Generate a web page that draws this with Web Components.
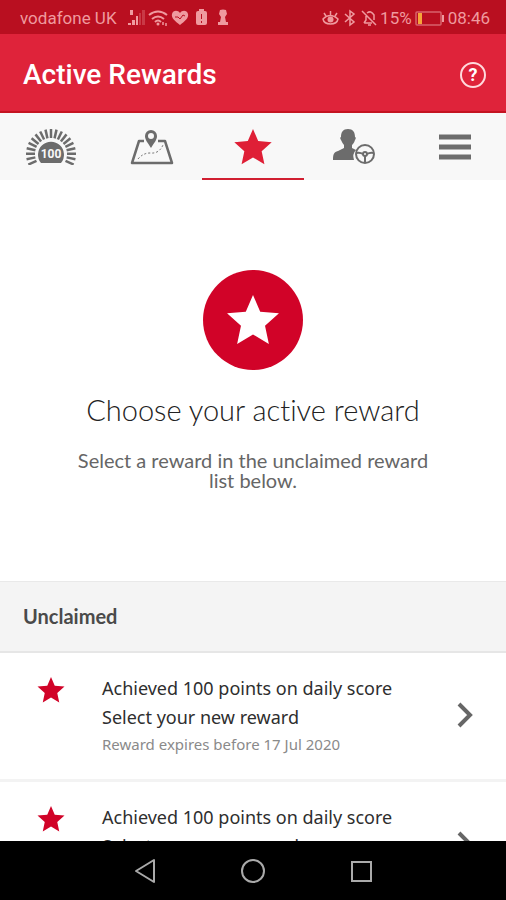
<!DOCTYPE html>
<html lang="en">
<head>
<meta charset="utf-8">
<meta name="viewport" content="width=device-width, initial-scale=1">
<title>Active Rewards</title>
<style>
body { margin: 0; background: #fff; font-family: Roboto, "Liberation Sans", sans-serif; }
</style>
</head>
<body>
<rewards-app></rewards-app>
<script>
const define = (name, html) => customElements.define(name, class extends HTMLElement {
  constructor() {
    super();
    const t = document.createElement('template');
    t.innerHTML = html;
    this.attachShadow({ mode: 'open' }).append(t.content.cloneNode(true));
  }
});

define('star-icon', `
<style>:host{display:block} svg{display:block;width:100%;height:100%}</style>
<svg viewBox="0 0 54 52" aria-hidden="true"><path fill="currentColor" d="M27 0 34.500 17.500 54 19 39.500 32 43.500 51 27 41 10.500 51 14.500 32 0 19 19.500 17.500Z"/></svg>`);

define('status-bar', `
<style>
:host{display:flex;align-items:center;justify-content:space-between;height:34px;padding:2px 16px 0 20px;box-sizing:border-box;background:#b90f20;color:#ef9a9f;font-size:17px;line-height:20px;white-space:nowrap}
div{display:flex;align-items:center}
svg{display:block;fill:none;stroke:currentColor;stroke-width:2}
.f{fill:currentColor;stroke:none}
.left{gap:10px}.right{gap:3px}
</style>
<div class="left"><span>vodafone UK</span>
<svg width="101" height="20" viewBox="0 0 101 20">
 <g class="f"><path d="M1 15h3v2H1zM5 12h3v5H5zM9 8h2v9H9zM3 2h3v5H3z"/><path opacity=".3" d="M12 5h2v12h-2zM15 2h3v15h-3z"/></g>
 <path d="M22 7q9-7 18 0M25 11q6-5 12 0M28 14q3-3 6 0"/><circle class="f" cx="31" cy="16" r="1.500"/><path d="M36 14v3M39 15v3" stroke-width="1.500"/>
 <path class="f" d="M53 17C48 13 44 10 45 6c1-4 6-4 8-1 2-3 7-3 8 1 1 4-3 7-8 11Z"/><path stroke="#b90f20" d="M48 9h3l2 2 3-4 2 1" stroke-width="1"/>
 <path class="f" d="M72 1h5v2h1q2 0 2 2v10q0 2-2 2h-7q-2 0-2-2V5q0-2 2-2h1z"/><path stroke="#b90f20" stroke-width="1" d="M74.500 6v5M74.500 13v2"/>
 <path class="f" d="M93 2q3-1 6 0l1 4-2 3 1 5h2v3H91v-3h2l1-5-2-3z"/>
</svg></div>
<div class="right">
<svg width="56" height="20" viewBox="0 0 56 20">
 <path d="M2 11q7-7 15 0-1 5-7.500 5T2 11ZM9.500 3v4M3 5l2 3M16 5l-2 3" stroke-width="1.500"/><circle class="f" cx="9.500" cy="11.500" r="3"/>
 <path stroke-width="1.500" d="m24 6 9 8-4 3V3l4 3-9 8"/>
 <path stroke-width="1.500" d="m41 3 14 14M43 15h8M43 15l2-3V8M46 5q4-3 7 2v5M47 17h3"/>
</svg><span>15%</span>
<svg width="30" height="16" viewBox="0 0 30 16"><rect x="1" y="2" width="25" height="13" rx="1" stroke-width="1.500" opacity=".6"/><path fill="#f6a43a" stroke="none" d="M3 3h4v11H3z"/><path d="M28 5v7"/></svg>
<span>08:46</span></div>`);

define('app-header', `
<style>
:host{display:flex;align-items:center;justify-content:space-between;height:79px;box-sizing:border-box;padding:4px 20px 0 23px;background:#df233a;border-bottom:2px solid #c41422;color:#fff}
h1{margin:0;font-size:28px;line-height:32px;font-weight:500}
button{display:block;padding:0;border:0;background:none;color:inherit;font:700 18px/22px Roboto,sans-serif;width:26px;height:26px;border:2px solid #ffd9dc;border-radius:50%;box-sizing:border-box}
</style>
<h1><slot></slot></h1><button aria-label="Help">?</button>`);

define('tab-bar', `
<style>
:host{display:grid;grid-template-columns:repeat(5,1fr);height:67px;background:#f8f8f8;color:#6c6c6c}
button{display:flex;align-items:center;justify-content:center;padding:2px 0 0;border:0;border-bottom:2px solid transparent;background:none;color:inherit}
button[aria-current]{color:#df1f36;border-color:#d11f31}
svg{display:block;fill:none;stroke:currentColor}
star-icon{width:38px;height:36px}
text{font:700 12px Roboto,sans-serif;fill:#f8f8f8;stroke:none}
</style>
<button aria-label="Score"><svg width="50" height="36" viewBox="0 0 50 36">
 <g id="rays" stroke-width="2.500"></g>
 <path fill="currentColor" stroke="none" d="M15 34a13 13 0 1 1 20 0Z"/><text x="25" y="29" text-anchor="middle">100</text></svg></button>
<button aria-label="Journeys"><svg width="44" height="36" viewBox="0 0 44 36">
 <path stroke-width="2.500" stroke-linejoin="round" d="M14 12H9L2 34h40L35 12h-7"/>
 <path fill="currentColor" stroke="none" fill-rule="evenodd" d="M21 19C18 14 15 11 15 7a6 6 0 0 1 12 0c0 4-3 7-6 12Zm0-15a3 3 0 1 0 0 6 3 3 0 0 0 0-6Z"/>
 <path stroke-dasharray="2 2" d="M8 30q5-6 12-6 9 1 13-8"/></svg></button>
<button aria-label="Rewards" aria-current="page"><star-icon></star-icon></button>
<button aria-label="Driver profile"><svg width="42" height="36" viewBox="0 0 42 36">
 <path fill="currentColor" stroke="none" d="M15 0c5 0 7 3 7 8 1 0 1 2 0 3-1 3-2 4-3 5v3l4 2q-4 4-2 10H0c0-6 1-8 5-9l6-3v-3c-1-1-2-3-3-5-1-1-1-3 0-3 0-5 2-8 7-8Z"/>
 <circle cx="32" cy="25" r="9" stroke-width="2"/><circle cx="32" cy="25" r="2" stroke-width="2"/><path stroke-width="2" d="M23 24q4-1 7 1M34 25q3-2 7-1M32 27v7"/></svg></button>
<button aria-label="Menu"><svg width="32" height="26" viewBox="0 0 32 26"><path stroke-width="5" d="M0 3h32M0 13h32M0 23h32"/></svg></button>`);

define('reward-intro', `
<style>
:host{display:flex;flex-direction:column;align-items:center;padding:90px 60px 91px;text-align:center;font-family:Lato,sans-serif;font-variant-ligatures:none}
.badge{display:grid;place-items:center;width:100px;height:100px;border-radius:50%;background:#d10328;color:#fff}
star-icon{width:52px;height:50px}
h2{margin:24px 0;font-size:29px;line-height:32px;font-weight:300;color:#222}
p{margin:0;max-width:366px;font-size:20px;line-height:20px;color:#666}
</style>
<div class="badge"><star-icon></star-icon></div>
<h2><slot name="title"></slot></h2><p><slot></slot></p>`);

define('list-heading', `
<style>
:host{display:block;padding:23px;background:#f4f4f4;border-top:1px solid #e9e9e9;border-bottom:2px solid #e6e6e6}
h3{margin:0;font:700 20px/23px Lato,sans-serif;color:#4a4a4a}
</style>
<h3><slot></slot></h3>`);

define('reward-item', `
<style>
:host{display:block;border-bottom:3px solid #f3f3f3}
a{display:grid;grid-template-columns:28px 1fr 17px;align-items:start;column-gap:37px;padding:21px 32px 23px 37px;text-decoration:none;color:#2e2e2e;font-family:"Noto Sans",sans-serif;font-size:18px;line-height:29px}
star-icon{width:28px;height:26px;margin-top:3px;color:#d10328}
span{display:block}
.note{font-size:15px;line-height:24px;color:#8a8a8a}
.arrow{display:block;align-self:center;fill:none;stroke:#666;stroke-width:4}
</style>
<a href="#reward"><star-icon></star-icon>
<div><span><slot></slot></span><span><slot name="action"></slot></span><span class="note"><slot name="note"></slot></span></div>
<svg class="arrow" width="17" height="26" viewBox="0 0 17 26"><path d="m2 2 11 11L2 24"/></svg></a>`);

define('system-nav', `
<style>
:host{display:flex;align-items:center;justify-content:center;gap:83px;height:59px;background:#000;color:#aaa}
button{display:block;padding:0;border:0;background:none;color:inherit}
svg{display:block;fill:none;stroke:currentColor;stroke-width:2}
</style>
<button aria-label="Back"><svg width="24" height="26" viewBox="0 0 24 26"><path stroke-linejoin="round" d="M21 2v22L3 13Z"/></svg></button>
<button aria-label="Home"><svg width="26" height="26" viewBox="0 0 26 26"><circle cx="13" cy="13" r="11"/></svg></button>
<button aria-label="Recent apps"><svg width="24" height="26" viewBox="0 0 24 26"><path d="M3 4h19v19H3Z"/></svg></button>`);

define('rewards-app', `
<style>
:host{display:flex;flex-direction:column;height:100vh}
main{flex:1;min-height:0;overflow:auto;scrollbar-width:none}
status-bar,app-header,tab-bar,system-nav{flex:none}
</style>
<status-bar></status-bar>
<app-header>Active Rewards</app-header>
<tab-bar></tab-bar>
<main>
<reward-intro><span slot="title">Choose your active reward</span>Select a reward in the unclaimed reward list below.</reward-intro>
<list-heading>Unclaimed</list-heading>
<reward-item>Achieved 100 points on daily score<span slot="action">Select your new reward</span><span slot="note">Reward expires before 17 Jul 2020</span></reward-item>
<reward-item>Achieved 100 points on daily score<span slot="action">Select your new reward</span><span slot="note">Reward expires before 17 Jul 2020</span></reward-item>
</main>
<system-nav></system-nav>`);

// Sunburst around the score badge: evenly spaced rays over the upper arc.
const rays = document.querySelector('rewards-app').shadowRoot.querySelector('tab-bar').shadowRoot.getElementById('rays');
for (let i = 0; i < 19; i++) {
  const a = (-205 + i * 230 / 18) * Math.PI / 180;
  const line = document.createElementNS('http://www.w3.org/2000/svg', 'line');
  line.setAttribute('x1', 25 + 16 * Math.cos(a));
  line.setAttribute('y1', 25 + 16 * Math.sin(a));
  line.setAttribute('x2', 25 + 25 * Math.cos(a));
  line.setAttribute('y2', 25 + 25 * Math.sin(a));
  rays.append(line);
}
</script>
</body>
</html>
